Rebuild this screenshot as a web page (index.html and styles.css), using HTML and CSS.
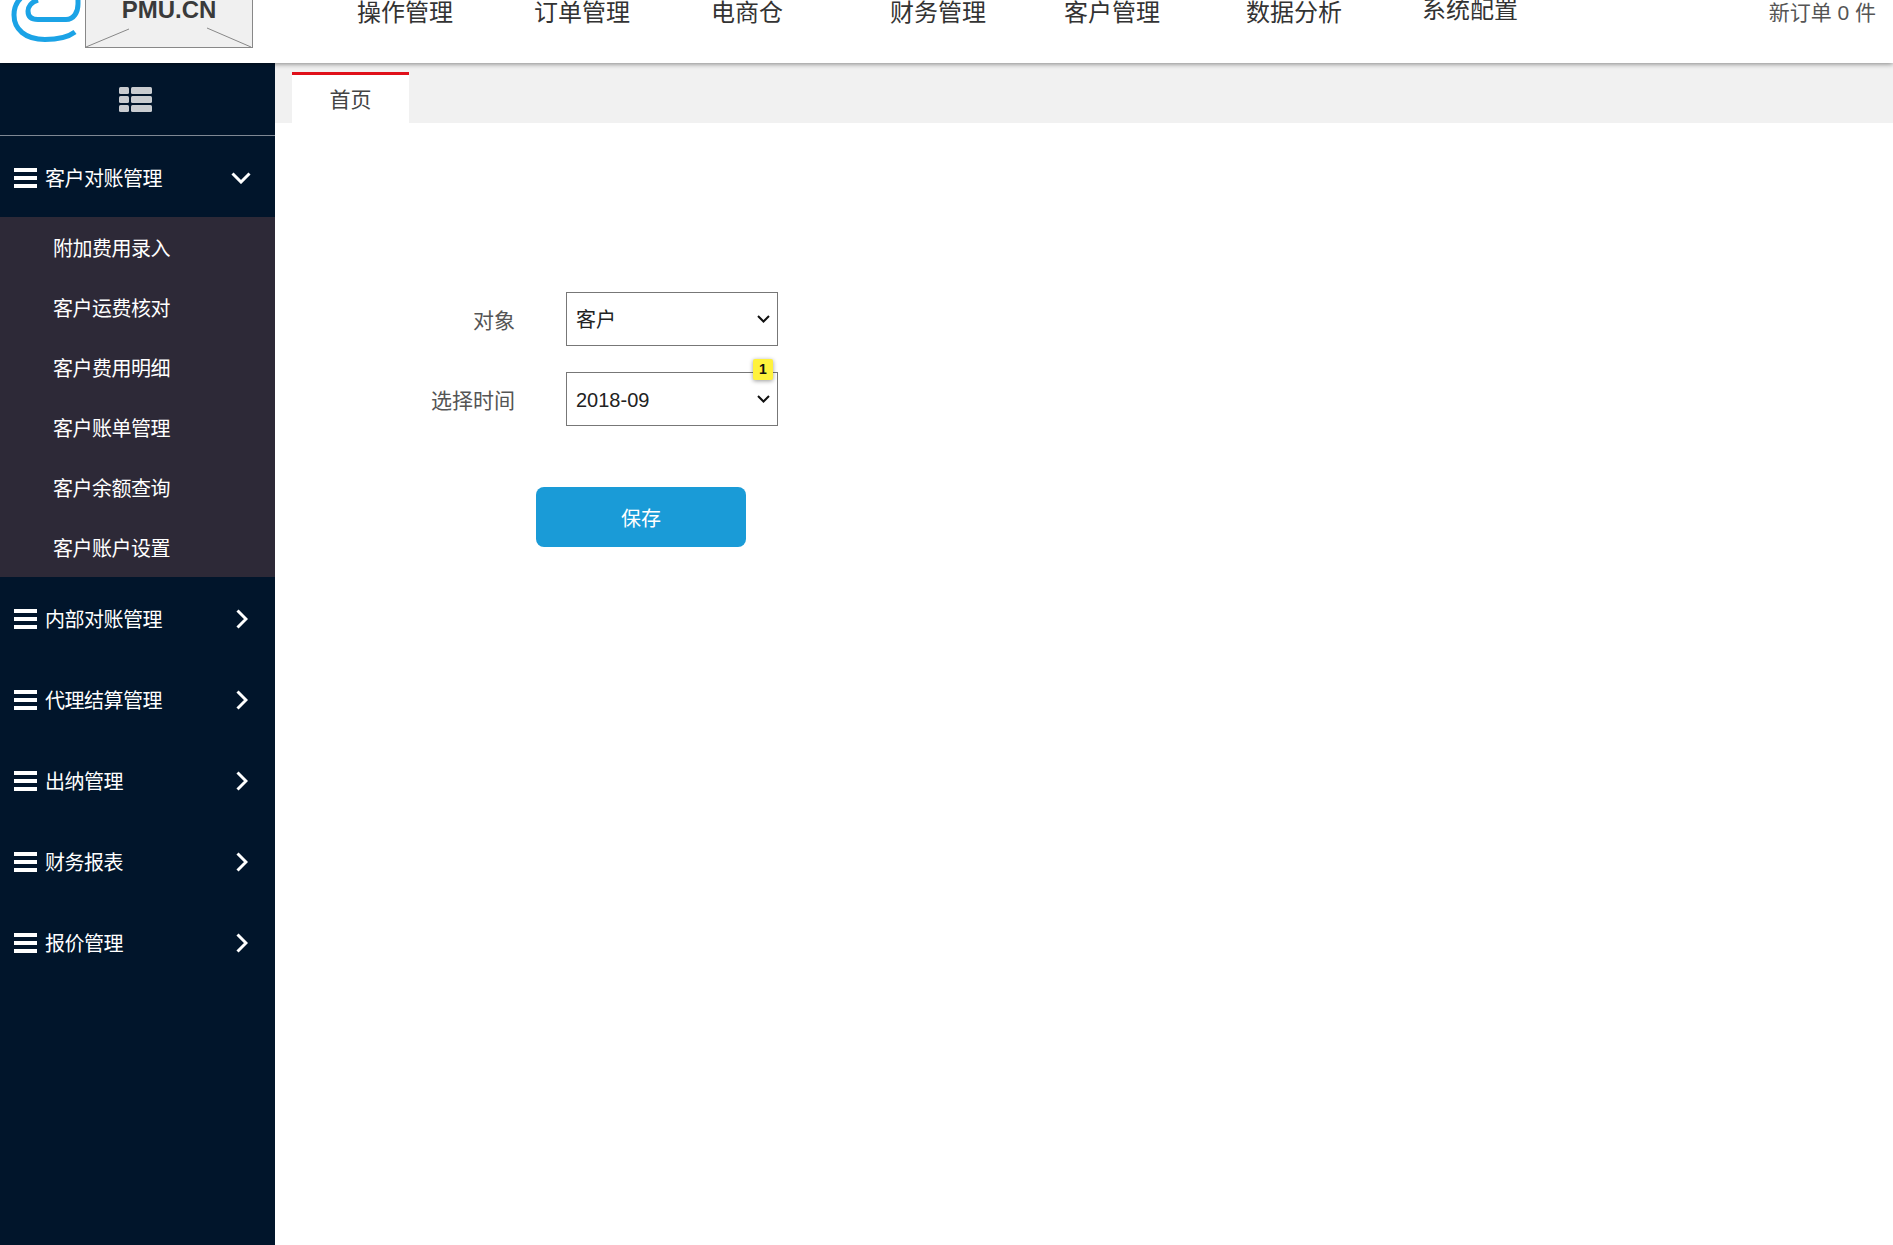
FILE: index.html
```html
<!DOCTYPE html>
<html lang="zh-CN">
<head>
  <meta charset="UTF-8" />
  <title>首页</title>
  <link rel="stylesheet" href="styles.css">
</head>
<body>
  <div class="header">
    <div class="brand">
      <svg class="logo" viewBox="0 0 85 48" width="85" height="48">
        <path d="M22 -3 C15 3 14 9 14 15 C14 29 25 39.5 45 39.5 C56 39.5 67 38 75 32" fill="none" stroke="#1ba3e6" stroke-width="5"/>
        <path d="M38 0 C31 2 28 7 28 11 C28 17 32 19.5 38 19.5 L66 19.5 C74 19.5 78 12 78 4 L78 -2" fill="none" stroke="#1ba3e6" stroke-width="5"/>
      </svg>
      <div class="logo-box">
        <svg class="logo-lines" viewBox="0 0 167 48" width="167" height="48">
          <path d="M1 47 L44 29 M166 47 L122 28" fill="none" stroke="#888" stroke-width="1"/>
        </svg>
        <span class="logo-text">PMU.CN</span>
      </div>
    </div>
    <div class="nav">
      <a href="#">操作管理</a>
      <a href="#">订单管理</a>
      <a href="#">电商仓</a>
      <a href="#">财务管理</a>
      <a href="#">客户管理</a>
      <a href="#">数据分析</a>
      <a href="#" class="raised">系统配置</a>
    </div>
    <div class="new-order">新订单 0 件</div>
  </div>

  <div class="main">
    <div class="sidebar">
      <div class="side-toggle">
        <svg viewBox="0 0 33 25" width="33" height="25" fill="#c9ccd0">
          <rect x="0" y="0" width="10" height="7" rx="1.5"/>
          <rect x="12" y="0" width="21" height="7" rx="1.5"/>
          <rect x="0" y="9" width="10" height="7" rx="1.5"/>
          <rect x="12" y="9" width="21" height="7" rx="1.5"/>
          <rect x="0" y="18" width="10" height="7" rx="1.5"/>
          <rect x="12" y="18" width="21" height="7" rx="1.5"/>
        </svg>
      </div>

      <div class="menu-group">
        <svg class="bars" viewBox="0 0 23 20" width="23" height="20" fill="#fff"><rect y="0" width="23" height="4"/><rect y="8" width="23" height="4"/><rect y="16" width="23" height="4"/></svg>
        <span class="menu-title">客户对账管理</span>
        <svg class="chev" viewBox="0 0 20 12" width="20" height="12"><path d="M1.5 1.5 L10 10 L18.5 1.5" fill="none" stroke="#fff" stroke-width="3"/></svg>
      </div>
      <div class="submenu">
        <a href="#">附加费用录入</a>
        <a href="#">客户运费核对</a>
        <a href="#">客户费用明细</a>
        <a href="#">客户账单管理</a>
        <a href="#">客户余额查询</a>
        <a href="#">客户账户设置</a>
      </div>

      <div class="menu-group">
        <svg class="bars" viewBox="0 0 23 20" width="23" height="20" fill="#fff"><rect y="0" width="23" height="4"/><rect y="8" width="23" height="4"/><rect y="16" width="23" height="4"/></svg>
        <span class="menu-title">内部对账管理</span>
        <svg class="chev-right" viewBox="0 0 12 20" width="12" height="20"><path d="M1.5 1.5 L10 10 L1.5 18.5" fill="none" stroke="#fff" stroke-width="3"/></svg>
      </div>
      <div class="menu-group">
        <svg class="bars" viewBox="0 0 23 20" width="23" height="20" fill="#fff"><rect y="0" width="23" height="4"/><rect y="8" width="23" height="4"/><rect y="16" width="23" height="4"/></svg>
        <span class="menu-title">代理结算管理</span>
        <svg class="chev-right" viewBox="0 0 12 20" width="12" height="20"><path d="M1.5 1.5 L10 10 L1.5 18.5" fill="none" stroke="#fff" stroke-width="3"/></svg>
      </div>
      <div class="menu-group">
        <svg class="bars" viewBox="0 0 23 20" width="23" height="20" fill="#fff"><rect y="0" width="23" height="4"/><rect y="8" width="23" height="4"/><rect y="16" width="23" height="4"/></svg>
        <span class="menu-title">出纳管理</span>
        <svg class="chev-right" viewBox="0 0 12 20" width="12" height="20"><path d="M1.5 1.5 L10 10 L1.5 18.5" fill="none" stroke="#fff" stroke-width="3"/></svg>
      </div>
      <div class="menu-group">
        <svg class="bars" viewBox="0 0 23 20" width="23" height="20" fill="#fff"><rect y="0" width="23" height="4"/><rect y="8" width="23" height="4"/><rect y="16" width="23" height="4"/></svg>
        <span class="menu-title">财务报表</span>
        <svg class="chev-right" viewBox="0 0 12 20" width="12" height="20"><path d="M1.5 1.5 L10 10 L1.5 18.5" fill="none" stroke="#fff" stroke-width="3"/></svg>
      </div>
      <div class="menu-group">
        <svg class="bars" viewBox="0 0 23 20" width="23" height="20" fill="#fff"><rect y="0" width="23" height="4"/><rect y="8" width="23" height="4"/><rect y="16" width="23" height="4"/></svg>
        <span class="menu-title">报价管理</span>
        <svg class="chev-right" viewBox="0 0 12 20" width="12" height="20"><path d="M1.5 1.5 L10 10 L1.5 18.5" fill="none" stroke="#fff" stroke-width="3"/></svg>
      </div>
    </div>

    <div class="content">
      <div class="tabs">
        <div class="tab">首页</div>
      </div>
      <div class="form">
        <div class="form-row">
          <label class="form-label">对象</label>
          <div class="select-wrap">
            <select class="form-select"><option>客户</option></select>
            <svg class="select-arrow" viewBox="0 0 13 8" width="13" height="8"><path d="M1 1 L6.5 6.5 L12 1" fill="none" stroke="#111" stroke-width="2"/></svg>
          </div>
        </div>
        <div class="form-row">
          <label class="form-label">选择时间</label>
          <div class="select-wrap">
            <select class="form-select"><option>2018-09</option></select>
            <svg class="select-arrow" viewBox="0 0 13 8" width="13" height="8"><path d="M1 1 L6.5 6.5 L12 1" fill="none" stroke="#111" stroke-width="2"/></svg>
            <span class="badge">1</span>
          </div>
        </div>
        <button class="save-btn">保存</button>
      </div>
    </div>
  </div>
</body>
</html>
```

FILE: styles.css
```css
* {
  box-sizing: border-box;
  margin: 0;
  padding: 0;
}

body {
  height: 100vh;
  overflow: hidden;
  font-family: "Liberation Sans", "Noto Sans CJK SC", sans-serif;
  background: #fff;
  color: #333;
}

.header {
  height: 63px;
  display: flex;
  position: relative;
  z-index: 2;
  background: #fff;
  box-shadow: 0 1px 5px rgba(0, 0, 0, 0.45);
}

.brand {
  width: 357px;
  height: 48px;
  display: flex;
  overflow: hidden;
}

.logo {
  display: block;
  flex: none;
}

.logo-box {
  width: 168px;
  height: 48px;
  background: #f0f0f0;
  border: 1px solid #888;
  border-top: 0;
  position: relative;
  text-align: center;
}

.logo-lines {
  position: absolute;
  left: -1px;
  top: 0;
}

.logo-text {
  font-size: 24px;
  font-weight: 700;
  line-height: 20px;
  color: #3a3a3a;
  display: block;
}

.nav {
  display: grid;
  grid-template-columns: 177px 177px 179px 174px 182px 176px auto;
  height: 30px;
}

.nav a {
  font-size: 24px;
  line-height: 26px;
  color: #333;
  text-decoration: none;
}

.nav a.raised {
  margin-top: -3px;
}

.new-order {
  position: absolute;
  right: 17px;
  top: 0;
  font-size: 21px;
  line-height: 26px;
  color: #555;
}

.main {
  display: flex;
  height: calc(100vh - 63px);
}

.sidebar {
  width: 275px;
  flex: none;
  background: #01152b;
  color: #fff;
}

.side-toggle {
  height: 73px;
  border-bottom: 1px solid #7f8894;
  padding-right: 5px;
  display: flex;
  align-items: center;
  justify-content: center;
}

.menu-group {
  height: 81px;
  display: flex;
  align-items: center;
  padding: 2px 0 0 14px;
  position: relative;
}

.menu-title {
  font-size: 20px;
  letter-spacing: -0.5px;
  margin-left: 8px;
}

.chev,
.chev-right {
  position: absolute;
  top: 50%;
  margin-top: 1px;
  transform: translateY(-50%);
}

.chev {
  left: 231px;
}

.chev-right {
  left: 236px;
}

.submenu {
  background: #2d2937;
  height: 360px;
}

.submenu a {
  display: block;
  height: 60px;
  line-height: 64px;
  padding-left: 53px;
  font-size: 20px;
  letter-spacing: -0.5px;
  color: #fff;
  text-decoration: none;
}

.content {
  flex: 1;
}

.tabs {
  height: 60px;
  background: #f1f1f1;
  padding: 9px 0 0 17px;
}

.tab {
  width: 117px;
  height: 51px;
  background: #fff;
  border-top: 3px solid #e0101a;
  text-align: center;
  font-size: 21px;
  line-height: 50px;
  color: #444;
}

.form {
  padding: 169px 0 0 0;
}

.form-row {
  display: flex;
  align-items: center;
  height: 54px;
  margin-bottom: 26px;
}

.form-label {
  width: 240px;
  text-align: right;
  font-size: 21px;
  color: #555;
}

.select-wrap {
  margin-left: 51px;
  position: relative;
}

.form-select {
  display: block;
  width: 212px;
  height: 54px;
  padding: 1px 0 0 9px;
  appearance: none;
  font-family: inherit;
  font-size: 20px;
  color: #222;
  background: #fff;
  border: 1px solid #777;
  border-radius: 0;
}

.select-arrow {
  position: absolute;
  right: 8px;
  top: 23px;
  pointer-events: none;
}

.badge {
  position: absolute;
  right: 5px;
  top: -13px;
  width: 20px;
  height: 21px;
  background: #fff23c;
  border-radius: 2px;
  box-shadow: 0 1px 4px rgba(0, 0, 0, 0.4);
  font-size: 14px;
  font-weight: 700;
  line-height: 21px;
  text-align: center;
  color: #111;
}

.save-btn {
  display: block;
  width: 210px;
  height: 60px;
  margin: 61px 0 0 261px;
  background: #1a9bd7;
  border: 0;
  border-radius: 8px;
  color: #fff;
  font-family: inherit;
  font-size: 20px;
}
```
